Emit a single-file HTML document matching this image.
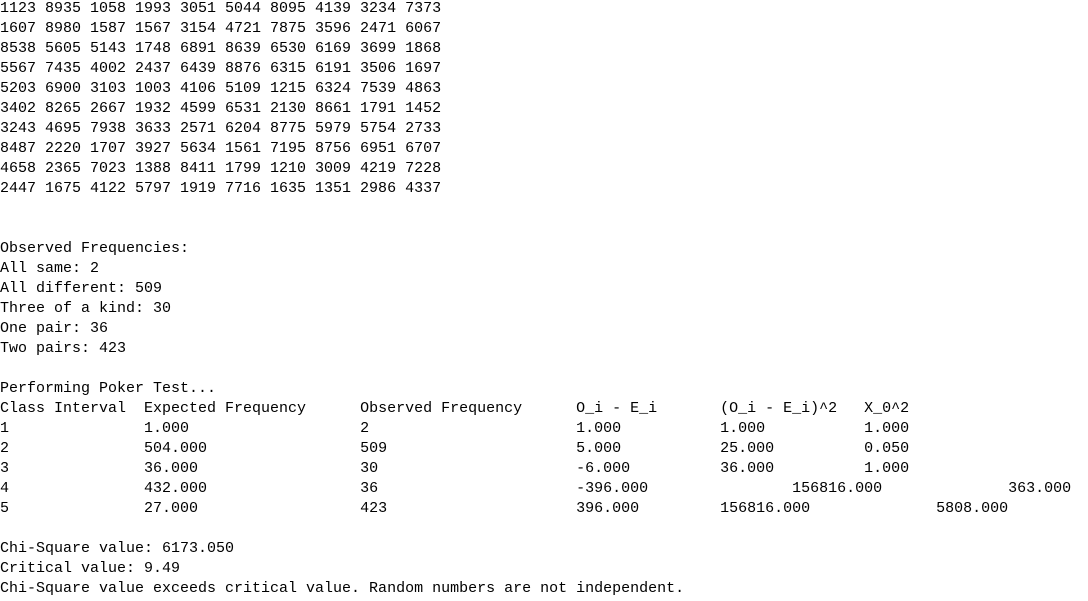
<!DOCTYPE html>
<html><head><meta charset="utf-8"><style>
html,body{margin:0;padding:0;background:#fff;width:1088px;height:601px;overflow:hidden}
pre{margin:0;position:relative;top:-1px;font-family:"Liberation Mono",monospace;font-size:15px;line-height:20px;color:#000;tab-size:8;-moz-tab-size:8;white-space:pre}
</style></head><body><pre>1123 8935 1058 1993 3051 5044 8095 4139 3234 7373
1607 8980 1587 1567 3154 4721 7875 3596 2471 6067
8538 5605 5143 1748 6891 8639 6530 6169 3699 1868
5567 7435 4002 2437 6439 8876 6315 6191 3506 1697
5203 6900 3103 1003 4106 5109 1215 6324 7539 4863
3402 8265 2667 1932 4599 6531 2130 8661 1791 1452
3243 4695 7938 3633 2571 6204 8775 5979 5754 2733
8487 2220 1707 3927 5634 1561 7195 8756 6951 6707
4658 2365 7023 1388 8411 1799 1210 3009 4219 7228
2447 1675 4122 5797 1919 7716 1635 1351 2986 4337


Observed Frequencies:
All same: 2
All different: 509
Three of a kind: 30
One pair: 36
Two pairs: 423

Performing Poker Test...
Class Interval	Expected Frequency	Observed Frequency	O_i - E_i	(O_i - E_i)^2	X_0^2
1		1.000			2			1.000		1.000		1.000
2		504.000			509			5.000		25.000		0.050
3		36.000			30			-6.000		36.000		1.000
4		432.000			36			-396.000		156816.000		363.000
5		27.000			423			396.000		156816.000		5808.000

Chi-Square value: 6173.050
Critical value: 9.49
Chi-Square value exceeds critical value. Random numbers are not independent.
</pre></body></html>
